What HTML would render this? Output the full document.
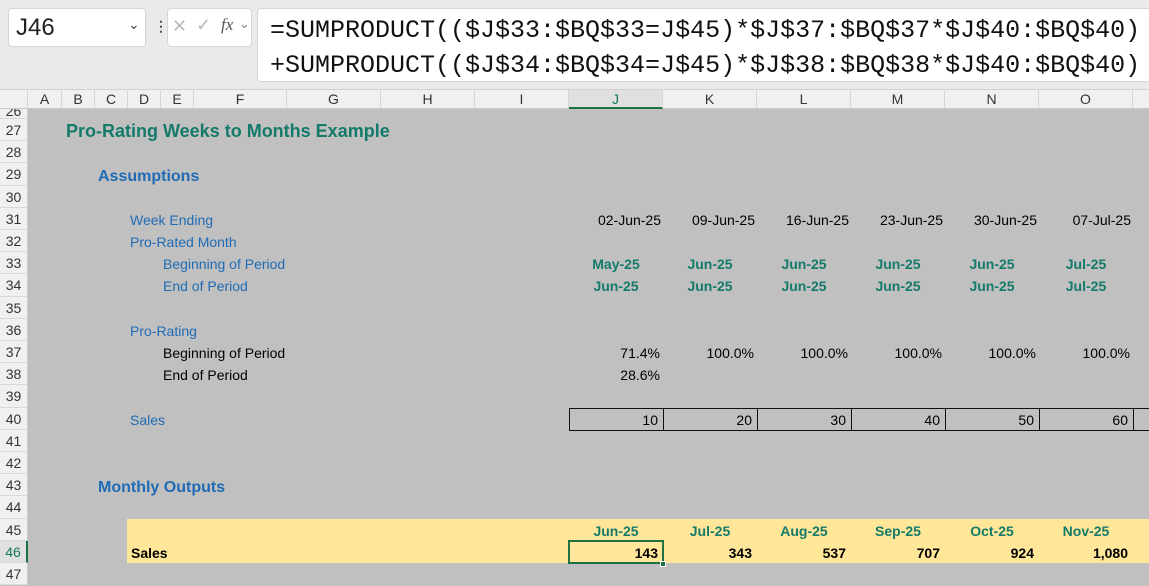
<!DOCTYPE html>
<html><head><meta charset="utf-8"><style>
*{margin:0;padding:0;box-sizing:border-box}
body{width:1149px;height:575px;overflow:hidden;background:#c0c0c0;font-family:"Liberation Sans",Arial,sans-serif;position:relative}
.a{position:absolute;white-space:nowrap}
.top{left:0;top:0;width:1149px;height:90px;background:#eaeaea;border-bottom:1px solid #d0d0d0}
.box{background:#fff;border:1px solid #d6d6d6;border-radius:4px}
.fm{font-family:"Liberation Mono",monospace;font-size:25px;color:#111;left:270px}
.hdr{top:90px;height:19px;background:#f0f0f0;border-bottom:1px solid #c8c8c8;font-size:14px;color:#333;text-align:center;line-height:19px}
.ch{border-right:1px solid #d4d4d4}
.rn{left:0;width:28px;background:#f0f0f0;border-right:1px solid #c8c8c8;border-bottom:1px solid #d8d8d8;font-size:14px;color:#333;text-align:center;height:22.2px;line-height:23px}
.c{font-size:14px;height:22.2px;line-height:24px}
.r{width:94px;text-align:right;padding-right:5px}
.m{width:94px;text-align:center;font-weight:bold;color:#147a6a}
.blue{color:#1f6bb5}
</style></head><body>
<div class="a top"></div>
<div class="a box" style="left:8px;top:8px;width:138px;height:39px"></div>
<div class="a" style="left:16px;top:14px;font-size:24px;color:#222">J46</div>
<div class="a" style="left:128px;top:16px;font-size:14px;color:#444">&#8964;</div>
<div class="a" style="left:154px;top:18px;font-size:14px;color:#555;font-weight:bold">&#8942;</div>
<div class="a box" style="left:167px;top:8px;width:85px;height:39px"></div>
<div class="a" style="left:172px;top:16px;font-size:18px;color:#bbb">&#10005;</div>
<div class="a" style="left:196px;top:15px;font-size:18px;color:#bbb">&#10003;</div>
<div class="a" style="left:221px;top:15px;font-size:17px;color:#555;font-family:'Liberation Serif',serif;font-style:italic">fx</div>
<div class="a" style="left:239px;top:16px;font-size:13px;color:#888">&#8964;</div>
<div class="a box" style="left:257px;top:8px;width:900px;height:74px"></div>
<div class="a fm" style="top:16px">=SUMPRODUCT(($J$33:$BQ$33=J$45)*$J$37:$BQ$37*$J$40:$BQ$40)</div>
<div class="a fm" style="top:51px">+SUMPRODUCT(($J$34:$BQ$34=J$45)*$J$38:$BQ$38*$J$40:$BQ$40)</div>

<div class="a hdr" style="left:0;width:1149px"></div>
<div class="a hdr ch" style="left:0;width:28px"></div>
<div class="a hdr ch" style="left:28px;width:34px">A</div>
<div class="a hdr ch" style="left:62px;width:33px">B</div>
<div class="a hdr ch" style="left:95px;width:33px">C</div>
<div class="a hdr ch" style="left:128px;width:33px">D</div>
<div class="a hdr ch" style="left:161px;width:33px">E</div>
<div class="a hdr ch" style="left:194px;width:93px">F</div>
<div class="a hdr ch" style="left:287px;width:94px">G</div>
<div class="a hdr ch" style="left:381px;width:94px">H</div>
<div class="a hdr ch" style="left:475px;width:94px">I</div>
<div class="a hdr ch" style="left:569px;width:94px;background:#e0e0e0;color:#147a50;border-bottom:2px solid #1e7145">J</div>
<div class="a hdr ch" style="left:663px;width:94px">K</div>
<div class="a hdr ch" style="left:757px;width:94px">L</div>
<div class="a hdr ch" style="left:851px;width:94px">M</div>
<div class="a hdr ch" style="left:945px;width:94px">N</div>
<div class="a hdr ch" style="left:1039px;width:94px">O</div>

<div class="a rn" style="top:109px;height:10px;line-height:4px;overflow:hidden">26</div>
<div class="a rn" style="top:119px">27</div>
<div class="a rn" style="top:141.2px">28</div>
<div class="a rn" style="top:163.4px">29</div>
<div class="a rn" style="top:185.6px">30</div>
<div class="a rn" style="top:207.8px">31</div>
<div class="a rn" style="top:230px">32</div>
<div class="a rn" style="top:252.2px">33</div>
<div class="a rn" style="top:274.4px">34</div>
<div class="a rn" style="top:296.6px">35</div>
<div class="a rn" style="top:318.8px">36</div>
<div class="a rn" style="top:341px">37</div>
<div class="a rn" style="top:363.2px">38</div>
<div class="a rn" style="top:385.4px">39</div>
<div class="a rn" style="top:407.6px">40</div>
<div class="a rn" style="top:429.8px">41</div>
<div class="a rn" style="top:452px">42</div>
<div class="a rn" style="top:474.2px">43</div>
<div class="a rn" style="top:496.4px">44</div>
<div class="a rn" style="top:518.6px">45</div>
<div class="a rn" style="top:540.8px;background:#e0e0e0;color:#147a50;border-right:2px solid #1e7145">46</div>
<div class="a rn" style="top:563px">47</div>

<div class="a c" style="left:66px;top:119px;font-size:18px;font-weight:bold;color:#147a6a;line-height:25px">Pro-Rating Weeks to Months Example</div>
<div class="a c blue" style="left:98px;top:165px;font-size:16px;font-weight:bold">Assumptions</div>
<div class="a c blue" style="left:130px;top:207.8px">Week Ending</div>
<div class="a c blue" style="left:130px;top:230px">Pro-Rated Month</div>
<div class="a c blue" style="left:163px;top:252.2px">Beginning of Period</div>
<div class="a c blue" style="left:163px;top:274.4px">End of Period</div>
<div class="a c blue" style="left:130px;top:318.8px">Pro-Rating</div>
<div class="a c" style="left:163px;top:341px">Beginning of Period</div>
<div class="a c" style="left:163px;top:363.2px">End of Period</div>
<div class="a c blue" style="left:130px;top:407.6px">Sales</div>
<div class="a c blue" style="left:98px;top:476px;font-size:16px;font-weight:bold">Monthly Outputs</div>

<div class="a c r" style="left:569px;top:207.8px;padding-right:2px">02-Jun-25</div>
<div class="a c r" style="left:663px;top:207.8px;padding-right:2px">09-Jun-25</div>
<div class="a c r" style="left:757px;top:207.8px;padding-right:2px">16-Jun-25</div>
<div class="a c r" style="left:851px;top:207.8px;padding-right:2px">23-Jun-25</div>
<div class="a c r" style="left:945px;top:207.8px;padding-right:2px">30-Jun-25</div>
<div class="a c r" style="left:1039px;top:207.8px;padding-right:2px">07-Jul-25</div>

<div class="a c m" style="left:569px;top:252.2px">May-25</div>
<div class="a c m" style="left:663px;top:252.2px">Jun-25</div>
<div class="a c m" style="left:757px;top:252.2px">Jun-25</div>
<div class="a c m" style="left:851px;top:252.2px">Jun-25</div>
<div class="a c m" style="left:945px;top:252.2px">Jun-25</div>
<div class="a c m" style="left:1039px;top:252.2px">Jul-25</div>
<div class="a c m" style="left:569px;top:274.4px">Jun-25</div>
<div class="a c m" style="left:663px;top:274.4px">Jun-25</div>
<div class="a c m" style="left:757px;top:274.4px">Jun-25</div>
<div class="a c m" style="left:851px;top:274.4px">Jun-25</div>
<div class="a c m" style="left:945px;top:274.4px">Jun-25</div>
<div class="a c m" style="left:1039px;top:274.4px">Jul-25</div>

<div class="a c r" style="left:569px;top:341px;padding-right:3px">71.4%</div>
<div class="a c r" style="left:663px;top:341px;padding-right:3px">100.0%</div>
<div class="a c r" style="left:757px;top:341px;padding-right:3px">100.0%</div>
<div class="a c r" style="left:851px;top:341px;padding-right:3px">100.0%</div>
<div class="a c r" style="left:945px;top:341px;padding-right:3px">100.0%</div>
<div class="a c r" style="left:1039px;top:341px;padding-right:3px">100.0%</div>
<div class="a c r" style="left:569px;top:363.2px;padding-right:3px">28.6%</div>

<div class="a" style="left:569px;top:408px;width:600px;height:23px;border:1px solid #111"></div>
<div class="a" style="left:663px;top:408px;width:1px;height:23px;background:#111"></div>
<div class="a" style="left:757px;top:408px;width:1px;height:23px;background:#111"></div>
<div class="a" style="left:851px;top:408px;width:1px;height:23px;background:#111"></div>
<div class="a" style="left:945px;top:408px;width:1px;height:23px;background:#111"></div>
<div class="a" style="left:1039px;top:408px;width:1px;height:23px;background:#111"></div>
<div class="a" style="left:1133px;top:408px;width:1px;height:23px;background:#111"></div>
<div class="a c r" style="left:569px;top:408px">10</div>
<div class="a c r" style="left:663px;top:408px">20</div>
<div class="a c r" style="left:757px;top:408px">30</div>
<div class="a c r" style="left:851px;top:408px">40</div>
<div class="a c r" style="left:945px;top:408px">50</div>
<div class="a c r" style="left:1039px;top:408px">60</div>

<div class="a" style="left:127px;top:519px;width:1022px;height:44px;background:#ffe699"></div>
<div class="a c m" style="left:569px;top:518.6px">Jun-25</div>
<div class="a c m" style="left:663px;top:518.6px">Jul-25</div>
<div class="a c m" style="left:757px;top:518.6px">Aug-25</div>
<div class="a c m" style="left:851px;top:518.6px">Sep-25</div>
<div class="a c m" style="left:945px;top:518.6px">Oct-25</div>
<div class="a c m" style="left:1039px;top:518.6px">Nov-25</div>
<div class="a c" style="left:131px;top:540.8px;font-weight:bold">Sales</div>
<div class="a c r" style="left:569px;top:540.8px;font-weight:bold">143</div>
<div class="a c r" style="left:663px;top:540.8px;font-weight:bold">343</div>
<div class="a c r" style="left:757px;top:540.8px;font-weight:bold">537</div>
<div class="a c r" style="left:851px;top:540.8px;font-weight:bold">707</div>
<div class="a c r" style="left:945px;top:540.8px;font-weight:bold">924</div>
<div class="a c r" style="left:1039px;top:540.8px;font-weight:bold">1,080</div>
<div class="a" style="left:568px;top:540px;width:96px;height:24px;border:2px solid #1e7145"></div>
<div class="a" style="left:660px;top:561px;width:6px;height:6px;background:#1e7145;border:1px solid #fff"></div>
</body></html>
